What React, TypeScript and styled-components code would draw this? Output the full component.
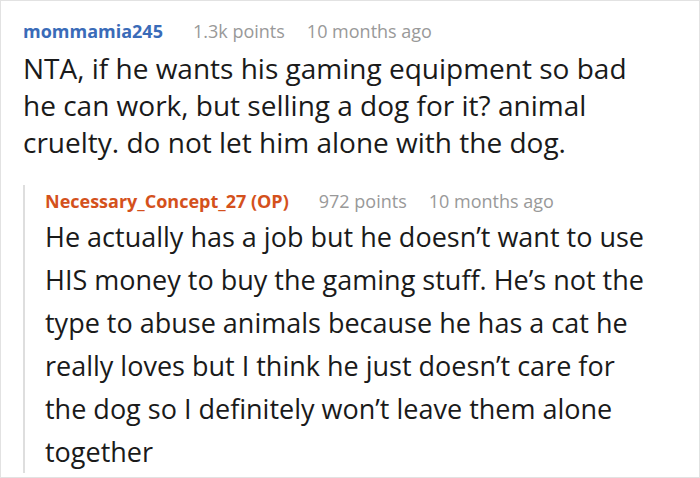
import React from "react"
import styled, {createGlobalStyle} from "styled-components"

const GlobalStyle = createGlobalStyle`
  html, body {
    margin: 0;
    padding: 0;
    background: #fff;
  }
  body {
    font-family: "Open Sans", "Noto Sans", sans-serif;
  }
`

const Frame = styled.div`
  box-sizing: border-box;
  width: 700px;
  height: 478px;
  border: 1px solid #e2e2e2;
  padding: 14px 12px 0 22px;
  overflow: hidden;
`

const Comment = styled.div`
  display: flex;
  flex-direction: column;
`

const Meta = styled.div`
  display: flex;
  align-items: baseline;
  gap: 22px;
  font-size: 18px;
  line-height: 32px;
  color: #999;
`

const Author = styled.span<{op?: boolean}>`
  font-weight: 700;
  color: ${(p) => (p.op ? "#d4511c" : "#3a6bb8")};
  margin-right: 8px;
`

const Body = styled.div`
  margin-top: 3px;
  width: 632px;
  font-size: 28px;
  line-height: 37px;
  color: #1a1a1a;
`

const Reply = styled.div`
  margin-top: 24px;
  border-left: 2px solid #dedede;
  padding-left: 20px;
  display: flex;
  flex-direction: column;
`

const ReplyBody = styled.div`
  margin-top: -2px;
  width: 612px;
  font-size: 27px;
  line-height: 43px;
  color: #1a1a1a;
`

export default function App() {
  return (
    <>
      <GlobalStyle />
      <Frame>
        <Comment>
          <Meta>
            <Author>mommamia245</Author>
            <span>1.3k points</span>
            <span>10 months ago</span>
          </Meta>
          <Body>
            NTA, if he wants his gaming equipment so bad he can work, but
            selling a dog for it? animal cruelty. do not let him alone with the
            dog.
          </Body>
        </Comment>
        <Reply>
          <Meta>
            <Author op>Necessary_Concept_27 (OP)</Author>
            <span>972 points</span>
            <span>10 months ago</span>
          </Meta>
          <ReplyBody>
            He actually has a job but he doesn’t want to use HIS money to buy
            the gaming stuff. He’s not the type to abuse animals because he has
            a cat he really loves but I think he just doesn’t care for the dog
            so I definitely won’t leave them alone together
          </ReplyBody>
        </Reply>
      </Frame>
    </>
  )
}
